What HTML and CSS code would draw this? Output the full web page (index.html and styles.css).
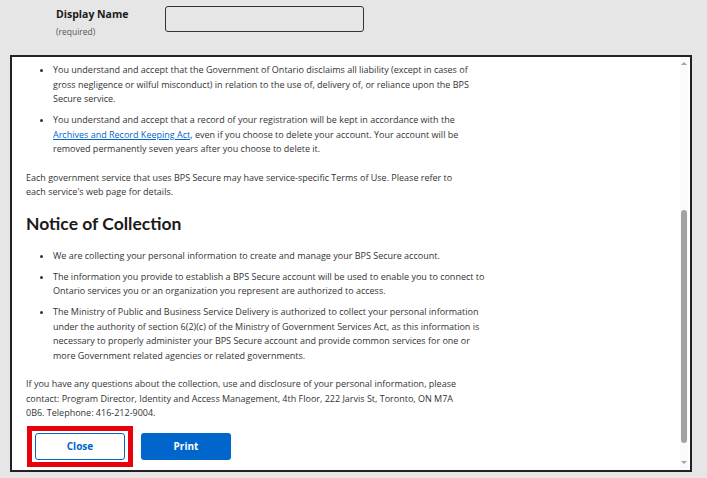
FILE: index.html
```html
<!DOCTYPE html>
<html lang="en">
<head>
    <meta charset="UTF-8">
    <meta name="viewport" content="width=device-width, initial-scale=1.0">
    <title>BPS Secure - Terms of Use</title>
    <link rel="stylesheet" href="styles.css">
</head>
<body>
    <!-- Feld hinter dem Dialog -->
    <div class="field-row">
        <div class="field-label">
            <span class="label-name">Display Name</span>
            <span class="label-hint">(required)</span>
        </div>
        <div class="field-input"></div>
    </div>

    <!-- Dialog mit Nutzungsbedingungen -->
    <div class="modal">
        <div class="modal-content">
            <ul class="terms-list">
                <li>You understand and accept that the Government of Ontario disclaims all liability (except in cases of gross negligence or wilful misconduct) in relation to the use of, delivery of, or reliance upon the BPS Secure service.</li>
                <li>You understand and accept that a record of your registration will be kept in accordance with the <a href="#">Archives and Record Keeping Act</a>, even if you choose to delete your account. Your account will be removed permanently seven years after you choose to delete it.</li>
            </ul>
            <p>Each government service that uses BPS Secure may have service-specific Terms of Use. Please refer to each service's web page for details.</p>

            <h2>Notice of Collection</h2>
            <ul class="terms-list">
                <li>We are collecting your personal information to create and manage your BPS Secure account.</li>
                <li>The information you provide to establish a BPS Secure account will be used to enable you to connect to Ontario services you or an organization you represent are authorized to access.</li>
                <li>The Ministry of Public and Business Service Delivery is authorized to collect your personal information under the authority of section 6(2)(c) of the Ministry of Government Services Act, as this information is necessary to properly administer your BPS Secure account and provide common services for one or more Government related agencies or related governments.</li>
            </ul>
            <p>If you have any questions about the collection, use and disclosure of your personal information, please contact: Program Director, Identity and Access Management, 4th Floor, 222 Jarvis St, Toronto, ON M7A 0B6. Telephone: 416-212-9004.</p>

            <div class="button-row">
                <div class="highlight-box">
                    <button class="btn btn-secondary">Close</button>
                </div>
                <button class="btn btn-primary">Print</button>
            </div>
        </div>

        <!-- Scrollleiste -->
        <div class="scrollbar">
            <span class="arrow-up"></span>
            <span class="thumb"></span>
            <span class="arrow-down"></span>
        </div>
    </div>
</body>
</html>
```

FILE: styles.css
```css
/* Grundlayout */
body {
    margin: 0;
    padding: 0;
    background-color: #e6e6e6;
    font-family: "Open Sans", "Liberation Sans", sans-serif;
    color: #333;
}

/* Feld oben */
.field-row {
    display: flex;
    padding: 6px 0 0 56px;
    height: 49px;
}

.field-label {
    display: flex;
    flex-direction: column;
    width: 109px;
}

.label-name {
    font-size: 10.5px;
    font-weight: bold;
    color: #1a1a1a;
    line-height: 16px;
}

.label-hint {
    font-size: 8.5px;
    color: #555;
    margin-top: 4px;
}

.field-input {
    width: 197px;
    height: 24px;
    border: 1px solid #333;
    border-radius: 3px;
}

/* Dialog */
.modal {
    position: relative;
    width: 678px;
    height: 413px;
    margin-left: 10px;
    background-color: white;
    border: 2px solid #222;
    overflow: hidden;
}

.modal-content {
    padding: 6px 0 0 14px;
    font-size: 9px;
    line-height: 14.5px;
}

.terms-list {
    margin: 0;
    padding-left: 27px;
}

.terms-list li {
    max-width: 435px;
    margin-bottom: 6.5px;
}

.modal-content p {
    max-width: 440px;
    margin: 14px 0 0 0;
}

.modal-content a {
    color: #0066cc;
}

.modal-content h2 {
    font-family: Lato, "Open Sans", sans-serif;
    font-size: 17.5px;
    font-weight: bold;
    color: #1a1a1a;
    margin: 13px 0 14px 0;
    line-height: 22px;
}

/* Buttons */
.button-row {
    display: flex;
    align-items: center;
    gap: 8px;
    margin: 5px 0 0 1px;
}

/* Rote Markierung um Close */
.highlight-box {
    display: flex;
    border: 5px solid #e8000b;
    padding: 2px 3px;
}

.btn {
    width: 90px;
    height: 27px;
    border-radius: 3px;
    font-family: "Open Sans", sans-serif;
    font-size: 10px;
    font-weight: bold;
    cursor: pointer;
}

.btn-secondary {
    background-color: white;
    color: #0066cc;
    border: 1px solid #0066cc;
}

.btn-primary {
    background-color: #0066cc;
    color: white;
    border: none;
}

/* Scrollleiste rechts */
.scrollbar {
    position: absolute;
    top: 0;
    right: 2px;
    bottom: 0;
    width: 8px;
    background-color: #fafafa;
}

.arrow-up, .arrow-down {
    position: absolute;
    left: 1px;
    width: 0;
    height: 0;
    border-left: 3px solid transparent;
    border-right: 3px solid transparent;
}

.arrow-up {
    top: 5px;
    border-bottom: 3px solid #a3a3a3;
}

.arrow-down {
    bottom: 6px;
    border-top: 3px solid #a3a3a3;
}

.thumb {
    position: absolute;
    top: 153px;
    left: 1px;
    width: 6px;
    height: 233px;
    border-radius: 3px;
    background-color: #a3a3a3;
}
```
